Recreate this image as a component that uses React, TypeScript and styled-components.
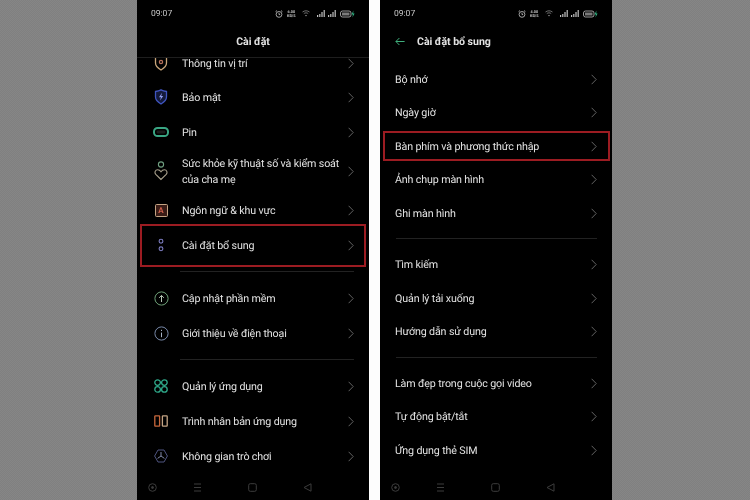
import React from 'react'
import styled, { createGlobalStyle } from 'styled-components'

const GlobalStyle = createGlobalStyle`
  html, body {
    margin: 0;
    padding: 0;
    background: #808080;
  }
`

function Chevron() {
  return (
    <ChevronSvg viewBox='0 0 6 11'>
      <polyline points='0.6,0.8 5.2,5.5 0.6,10.2' fill='none' stroke='#626262' strokeWidth='1' />
    </ChevronSvg>
  )
}

const LocationIcon = () => (
  <svg width='14' height='16' viewBox='0 0 14 16' fill='none' stroke='#c9a57a' strokeWidth='1.3'>
    <path d='M1.5 2.5 C4 2 5.5 1.5 7 0.8 C8.5 1.5 10 2 12.5 2.5 V8 C12.5 11 9.5 13.5 7 15 C4.5 13.5 1.5 11 1.5 8 Z' />
    <circle cx='7' cy='7' r='1.6' stroke='#b5705a' />
  </svg>
)

const ShieldIcon = () => (
  <svg width='14' height='16' viewBox='0 0 14 16' fill='none'>
    <path d='M1.5 2.5 C4 2 5.5 1.5 7 0.8 C8.5 1.5 10 2 12.5 2.5 V8 C12.5 11 9.5 13.5 7 15 C4.5 13.5 1.5 11 1.5 8 Z' stroke='#3f55c0' strokeWidth='1.3' fill='#141a3a' />
    <path d='M8 3.8 L5 8.2 H7 L6 11.6 L9.2 7 H7.2 Z' fill='#8f9cf0' />
  </svg>
)

const BatteryIcon = () => (
  <svg width='16' height='10' viewBox='0 0 16 10' fill='none'>
    <rect x='1' y='1' width='14' height='8' rx='3.6' stroke='#3aa583' strokeWidth='2' />
    <rect x='3.5' y='3.5' width='9' height='3' rx='1.4' fill='#1c1c1c' />
  </svg>
)

const CareIcon = () => (
  <svg width='14' height='20' viewBox='0 0 14 20' fill='none' stroke='#6f9f80' strokeWidth='1.1'>
    <circle cx='7' cy='3.5' r='2.6' />
    <path d='M7 18.5 L1.8 13.4 C0.2 11.6 1.2 8.8 3.6 8.8 C5.2 8.8 6.2 9.6 7 10.8 C7.8 9.6 8.8 8.8 10.4 8.8 C12.8 8.8 13.8 11.6 12.2 13.4 Z' stroke='#a8a08c' />
  </svg>
)

const DotsIcon = () => (
  <svg width='6' height='14' viewBox='0 0 6 14' fill='none' stroke='#7c7cc0' strokeWidth='1.1'>
    <circle cx='3' cy='3.2' r='1.9' />
    <circle cx='3' cy='10.8' r='1.9' />
  </svg>
)

const UpdateIcon = () => (
  <svg width='15' height='15' viewBox='0 0 15 15' fill='none' stroke='#6fa078' strokeWidth='1'>
    <circle cx='7.5' cy='7.5' r='6.6' />
    <path d='M7.5 11 V4.6 M5.2 6.8 L7.5 4.4 L9.8 6.8' stroke='#b8c8b8' />
  </svg>
)

const InfoIcon = () => (
  <svg width='15' height='15' viewBox='0 0 15 15' fill='none' stroke='#7888a8' strokeWidth='1'>
    <circle cx='7.5' cy='7.5' r='6.6' />
    <path d='M7.5 6.6 V11.2 M7.5 3.8 V5' stroke='#a8b4c8' />
  </svg>
)

const AppsIcon = () => (
  <svg width='14' height='14' viewBox='0 0 14 14' fill='none' stroke='#2fa98a' strokeWidth='1.3'>
    <circle cx='3.6' cy='3.6' r='2.8' />
    <circle cx='10.4' cy='3.6' r='2.8' />
    <circle cx='3.6' cy='10.4' r='2.8' />
    <circle cx='10.4' cy='10.4' r='2.8' />
  </svg>
)

const CloneIcon = () => (
  <svg width='14' height='12' viewBox='0 0 14 12' fill='none' strokeWidth='1.3'>
    <rect x='0.8' y='0.8' width='4.8' height='10.4' rx='0.6' stroke='#c8683c' />
    <rect x='8.4' y='0.8' width='4.8' height='10.4' rx='0.6' stroke='#c4a484' />
  </svg>
)

const GameIcon = () => (
  <svg width='14' height='14' viewBox='0 0 14 14' fill='none' stroke='#4f5580' strokeWidth='1'>
    <path d='M4 1 H10 L13.4 7 L10 13 H4 L0.6 7 Z' strokeLinejoin='round' />
    <path d='M7 7 V3 M7 7 L3.6 9.4 M7 7 L10.4 9.4' stroke='#8088a8' />
  </svg>
)

const AlarmIcon = () => (
  <svg width='8' height='8' viewBox='0 0 8 8' fill='none' stroke='#c8c8c8' strokeWidth='0.8'>
    <circle cx='4' cy='4.4' r='2.9' />
    <path d='M4 2.8 V4.6 H5.2 M0.6 1.6 L2 0.6 M7.4 1.6 L6 0.6' />
  </svg>
)

const WifiIcon = () => (
  <svg width='8' height='7' viewBox='0 0 8 7' fill='none' stroke='#8a8a8a' strokeWidth='0.8'>
    <path d='M0.5 2 C2.5 0.4 5.5 0.4 7.5 2 M1.8 3.6 C3 2.6 5 2.6 6.2 3.6' />
    <circle cx='4' cy='5.6' r='0.7' fill='#c0c0c0' stroke='none' />
  </svg>
)

const SignalIcon = () => (
  <svg width='8' height='7' viewBox='0 0 8 7' fill='#c0c0c0'>
    <rect x='0' y='5' width='1.2' height='2' />
    <rect x='2.2' y='4' width='1.2' height='3' />
    <rect x='4.4' y='2' width='1.2' height='5' />
    <rect x='6.6' y='0' width='1.2' height='7' />
  </svg>
)

const BatteryStatus = () => (
  <svg width='15' height='8' viewBox='0 0 15 8' fill='none'>
    <rect x='0.5' y='1' width='10.5' height='6' rx='2' stroke='#c0c0c0' strokeWidth='0.8' />
    <rect x='2' y='2.5' width='7.5' height='3' fill='#7a7a7a' />
    <path d='M13.4 0.4 L11.6 4.4 H13 L12.4 7.6 L14.6 3.4 H13.2 Z' fill='#2fb583' />
  </svg>
)

function StatusBar({ speed }: { speed: string }) {
  return (
    <StatusRow>
      <Clock>09:07</Clock>
      <StatusIcons>
        <AlarmIcon />
        <Speed>
          {speed}
          <br />
          KB/S
        </Speed>
        <WifiSlot>
          <WifiIcon />
        </WifiSlot>
        <SignalIcon />
        <SignalIcon />
        <BatteryStatus />
      </StatusIcons>
    </StatusRow>
  )
}

function NavBar() {
  return (
    <NavRow>
      <svg width='9' height='9' viewBox='0 0 9 9' fill='none' stroke='#3c3c3c'>
        <circle cx='4.5' cy='4.5' r='3.8' />
        <circle cx='4.5' cy='4.5' r='1' fill='#3c3c3c' />
      </svg>
      <svg width='9' height='9' viewBox='0 0 9 9' fill='none' stroke='#3c3c3c'>
        <path d='M1 1 H8 M1 4.5 H8 M1 8 H8' />
      </svg>
      <svg width='9' height='9' viewBox='0 0 9 9' fill='none' stroke='#3c3c3c'>
        <rect x='0.7' y='0.7' width='7.6' height='7.6' rx='1.6' />
      </svg>
      <svg width='9' height='9' viewBox='0 0 9 9' fill='none' stroke='#3c3c3c'>
        <path d='M1 4.5 L8 0.8 V8.2 Z' strokeLinejoin='round' />
      </svg>
    </NavRow>
  )
}

function SettingRow({
  label,
  icon,
  tall,
  outset,
  flat,
}: {
  label: string
  icon?: React.ReactNode
  tall?: boolean
  outset?: number
  flat?: boolean
}) {
  return (
    <Row $tall={tall} $flat={flat}>
      {!flat && <IconSlot>{icon}</IconSlot>}
      <Label>{label}</Label>
      <Chevron />
      {outset !== undefined && <Highlight $outset={outset} $flat={flat} />}
    </Row>
  )
}

export default function App() {
  return (
    <>
      <GlobalStyle />
      <Page>
        <LeftSide />
        <Phone>
          <StatusBar speed='6.00' />
          <Header $centered $ruled>
            <Title>Cài đặt</Title>
          </Header>
          <List>
            <ScrolledOff>
              <SettingRow label='Thông tin vị trí' icon={<LocationIcon />} />
            </ScrolledOff>
            <SettingRow label='Bảo mật' icon={<ShieldIcon />} />
            <SettingRow label='Pin' icon={<BatteryIcon />} />
            <SettingRow label='Sức khỏe kỹ thuật số và kiểm soát của cha mẹ' icon={<CareIcon />} tall />
            <SettingRow label='Ngôn ngữ & khu vực' icon={<LanguageBadge>A</LanguageBadge>} />
            <SettingRow label='Cài đặt bổ sung' icon={<DotsIcon />} outset={4} />
            <Separator />
            <SettingRow label='Cập nhật phần mềm' icon={<UpdateIcon />} />
            <SettingRow label='Giới thiệu về điện thoại' icon={<InfoIcon />} />
            <Separator />
            <SettingRow label='Quản lý ứng dụng' icon={<AppsIcon />} />
            <SettingRow label='Trình nhân bản ứng dụng' icon={<CloneIcon />} />
            <SettingRow label='Không gian trò chơi' icon={<GameIcon />} />
          </List>
          <NavBar />
        </Phone>
        <Gutter />
        <Phone>
          <StatusBar speed='4.00' />
          <Header>
            <BackArrow viewBox='0 0 10 9' fill='none' stroke='#3fae7c' strokeWidth='1'>
              <path d='M9.6 4.5 H1 M4.4 1 L0.9 4.5 L4.4 8' />
            </BackArrow>
            <Title>Cài đặt bổ sung</Title>
          </Header>
          <List $flat>
            <SettingRow flat label='Bộ nhớ' />
            <SettingRow flat label='Ngày giờ' />
            <SettingRow flat label='Bàn phím và phương thức nhập' outset={-1.5} />
            <SettingRow flat label='Ảnh chụp màn hình' />
            <SettingRow flat label='Ghi màn hình' />
            <Separator $flat />
            <SettingRow flat label='Tìm kiếm' />
            <SettingRow flat label='Quản lý tải xuống' />
            <SettingRow flat label='Hướng dẫn sử dụng' />
            <Separator $flat />
            <SettingRow flat label='Làm đẹp trong cuộc gọi video' />
            <SettingRow flat label='Tự động bật/tắt' />
            <SettingRow flat label='Ứng dụng thẻ SIM' />
          </List>
          <NavBar />
        </Phone>
        <RightSide />
      </Page>
    </>
  )
}

const Page = styled.div`
  display: flex;
  width: 750px;
  height: 500px;
  overflow: hidden;
  font-family: Roboto, 'Liberation Sans', sans-serif;
  text-rendering: geometricPrecision;
`

const LeftSide = styled.div`
  flex: none;
  width: 137px;
  background: repeating-conic-gradient(#808080 0 25%, #868686 0 50%) 0 0 / 2px 2px;
`

const RightSide = styled(LeftSide)`
  flex: 1;
  width: auto;
`

const Gutter = styled.div`
  width: 11px;
  background: #fdfdfd;
`

const Phone = styled.div`
  display: flex;
  flex-direction: column;
  flex: none;
  width: 232px;
  height: 500px;
  background: #000;
  color: #d6d6d6;
  filter: blur(0.35px);
`

const StatusRow = styled.div`
  display: flex;
  align-items: center;
  justify-content: space-between;
  box-sizing: border-box;
  height: 26px;
  padding: 1px 14px 0;
  flex: none;
`

const Clock = styled.span`
  font-size: 8.5px;
  color: #c8c8c8;
`

const StatusIcons = styled.div`
  display: flex;
  align-items: center;
  gap: 3.6px;
`

const Speed = styled.span`
  font-size: 3.8px;
  line-height: 4px;
  font-weight: 700;
  color: #c4c4c4;
  text-align: center;
`

const WifiSlot = styled.span`
  display: flex;
  margin: 0 3px;
`

const Header = styled.div<{ $centered?: boolean; $ruled?: boolean }>`
  display: flex;
  align-items: center;
  justify-content: ${(p) => (p.$centered ? 'center' : 'flex-start')};
  flex: none;
  height: 32px;
  padding-left: ${(p) => (p.$centered ? '0' : '15px')};
  border-bottom: 1px solid ${(p) => (p.$ruled ? '#1e1e1e' : 'transparent')};
  box-sizing: border-box;
`

const Title = styled.span`
  font-size: 10.6px;
  font-weight: 700;
  letter-spacing: -0.05px;
  color: #e2e2e2;
`

const BackArrow = styled.svg`
  width: 10px;
  height: 9px;
  margin-right: 12px;
`

const List = styled.div<{ $flat?: boolean }>`
  flex: 1;
  min-height: 0;
  overflow: hidden;
  padding-top: ${(p) => (p.$flat ? '4.25px' : '0')};
`

const ScrolledOff = styled.div`
  margin: -12.5px 0 -1px;
`

const Row = styled.div<{ $tall?: boolean; $flat?: boolean }>`
  position: relative;
  display: flex;
  align-items: center;
  box-sizing: border-box;
  height: ${(p) => (p.$tall ? '43px' : p.$flat ? '33.5px' : '35px')};
  padding: 0 15px 0 ${(p) => (p.$flat ? '15px' : '12px')};
`

const IconSlot = styled.span`
  display: flex;
  align-items: center;
  justify-content: center;
  flex: none;
  width: 24px;
  margin-right: 9px;
`

const Label = styled.span`
  flex: 1;
  max-width: 162px;
  margin-right: auto;
  padding-top: 1px;
  font-size: 10.7px;
  letter-spacing: -0.14px;
  line-height: 16px;
  color: #e2e2e2;
`

const ChevronSvg = styled.svg`
  flex: none;
  width: 6px;
  height: 11px;
`

const Highlight = styled.span<{ $outset: number; $flat?: boolean }>`
  position: absolute;
  top: ${(p) => -p.$outset}px;
  bottom: ${(p) => -p.$outset}px;
  left: 3px;
  right: ${(p) => (p.$flat ? '2px' : '3px')};
  border: 2px solid #9c1c22;
`

const Separator = styled.div<{ $flat?: boolean }>`
  display: flex;
  align-items: center;
  box-sizing: border-box;
  height: 18px;
  padding-bottom: ${(p) => (p.$flat ? '0' : '1px')};
  margin: 0 15px 0 ${(p) => (p.$flat ? '16px' : '43px')};

  &::before {
    content: '';
    flex: 1;
    height: 1px;
    background: #222;
  }
`

const LanguageBadge = styled.span`
  display: flex;
  align-items: center;
  justify-content: center;
  box-sizing: border-box;
  width: 13px;
  height: 13px;
  border: 1px solid #c4a484;
  border-radius: 1.5px;
  background: #3a1c16;
  color: #d0604c;
  font-size: 8px;
  font-weight: 700;
`

const NavRow = styled.div`
  display: grid;
  grid-template-columns: 45px 55px 55px 9px;
  align-items: center;
  flex: none;
  height: 26px;
  padding-left: 11px;
`
